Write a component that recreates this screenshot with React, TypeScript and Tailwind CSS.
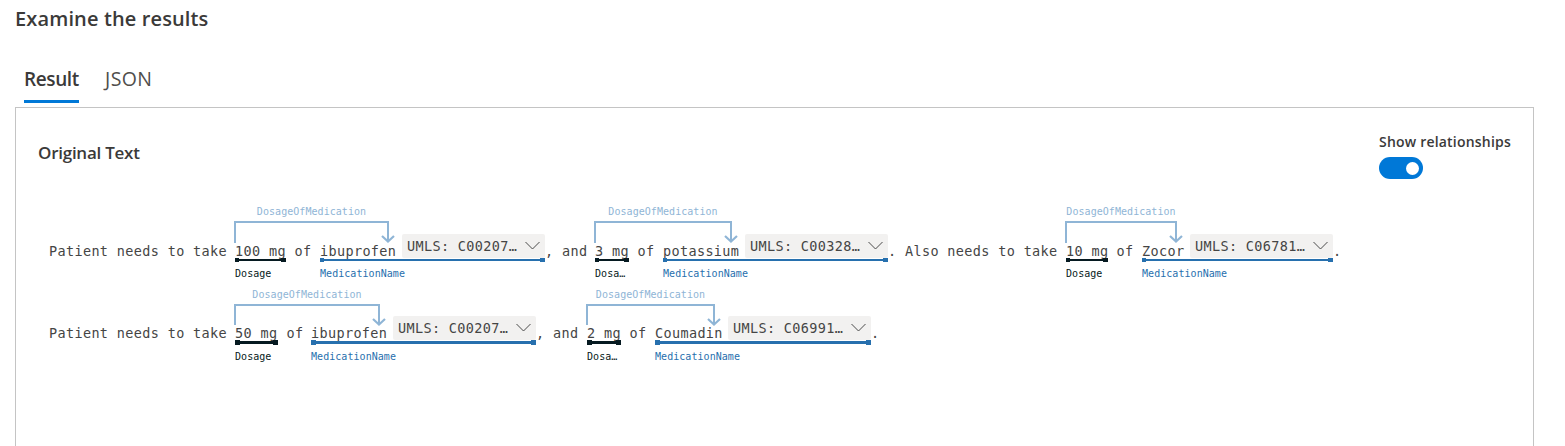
import React, { useState } from 'react';

type Relation = { width: number; label: string };

const BODY = "font-['DejaVu_Sans_Mono',monospace] text-[13.5px] leading-[20px] tracking-[0.35px] text-[#454545] whitespace-pre";
const SMALL = "font-['DejaVu_Sans_Mono',monospace] text-[10px] leading-[14px] tracking-[0.05px] whitespace-pre";

function Plain({ text, width }: { text: string; width: string }) {
  return <div className={`${BODY} ${width} shrink-0 pt-[37px]`}>{text}</div>;
}

function RelationArrow({ width, label, heavy }: Relation & { heavy?: boolean }) {
  return (
    <div className="absolute top-0 left-[-1px] text-[#8fb5d6]" style={{ width: width + 2 }}>
      <div className={`flex justify-center ${heavy ? 'h-[18px] pt-[2px]' : 'h-[17px] pt-px'} ${SMALL}`}>
        <span>{label}</span>
      </div>
      <svg className="block overflow-visible" width={width + 2} height="24" fill="none" stroke="currentColor" strokeWidth="2">
        <path d={`M1 ${heavy ? 21 : 22}V1H${width + 1}V20`} />
        <path d={`M${width - 5} 15L${width + 1} 20.5L${width + 7} 15`} strokeWidth="2.2" />
      </svg>
    </div>
  );
}

type EntityProps = {
  text: string;
  width: string;
  label: string;
  kind: 'dose' | 'drug';
  code?: string;
  heavy?: boolean;
  relation?: Relation;
};

function Entity({ text, width, label, kind, code, heavy, relation }: EntityProps) {
  const tone = kind === 'dose' ? 'text-[#061a21]' : 'text-[#2770ae]';
  return (
    <div className={`relative shrink-0 ${width}`}>
      {relation && <RelationArrow {...relation} heavy={heavy} />}
      <div className="flex pt-[30px]">
        <span className={`${BODY} pt-[7px]`}>{text}</span>
        {code && (
          <div className="ml-auto flex h-6 w-[143px] items-center justify-between rounded-[2px] bg-[#f2f1f0] pr-[5px] pl-[5px]">
            <span className={BODY}>{code}</span>
            <svg className="relative top-[-1px]" width="15" height="9" fill="none" stroke="#4a4a4a" strokeWidth="1">
              <path d="M0.5 1L7.5 8L14.5 1" />
            </svg>
          </div>
        )}
      </div>
      <div className={`absolute top-[54px] left-0 flex w-full items-center justify-between ${tone} ${heavy ? 'h-[5px]' : 'h-1'}`}>
        <i className={`h-full bg-current ${heavy ? 'w-[5px]' : 'w-1'}`} />
        <i className={`flex-1 bg-current ${heavy ? 'h-[3px]' : 'h-[2px]'}`} />
        <i className="h-full w-[5px] bg-current" />
      </div>
      <div className={`absolute left-0 ${heavy ? 'top-[64px]' : 'top-[63px]'} ${SMALL} ${tone}`}>{label}</div>
    </div>
  );
}

const REL = 'DosageOfMedication';

export default function App() {
  const [on, setOn] = useState(true);
  return (
    <main className="h-[446px] w-[1565px] overflow-hidden bg-white pl-[15px] font-['Open_Sans',sans-serif] text-[#3b3a39]">
      <h1 className="h-[60px] pt-[5px] text-[20px] leading-[28px] font-semibold tracking-[0.13px]">Examine the results</h1>
      <nav className="flex h-[43px] gap-[26px] pl-[9px] text-[19px] leading-[28px]">
        <button className="flex h-[43px] w-[55px] items-start border-b-[3px] border-[#0078d7] pt-[5px] font-semibold tracking-[-0.4px] whitespace-nowrap">Result</button>
        <button className="flex pt-[5px] text-[19.5px] tracking-[0.4px] text-[#504e4c]">JSON</button>
      </nav>
      <section className="mt-1 h-[400px] w-[1519px] border border-[#c4c4c4] pr-[22px] pl-[22px]">
        <header className="flex h-[96px] justify-between">
          <h2 className="pt-[32px] text-[17px] leading-[26px] font-semibold tracking-[-0.25px]">Original Text</h2>
          <div className="w-[132px] pt-[24px]">
            <div className="text-[14px] leading-[20px] font-semibold tracking-[0.2px] whitespace-nowrap">Show relationships</div>
            <button
              role="switch"
              aria-checked={on}
              aria-label="Show relationships"
              onClick={() => setOn(!on)}
              className={`mt-[5px] flex h-[22px] w-[44px] items-center rounded-full px-1 ${on ? 'justify-end bg-[#0078d7]' : 'justify-start bg-[#8a8886]'}`}
            >
              <i className="h-[13px] w-[13px] rounded-full bg-white" />
            </button>
          </div>
        </header>
        <div className="flex h-[82px] pl-[11px]">
          <Plain text="Patient needs to take " width="w-[186px]" />
          <Entity kind="dose" text="100 mg" width="w-[51px]" label="Dosage" relation={{ width: 153, label: REL }} />
          <Plain text=" of " width="w-[34px]" />
          <Entity kind="drug" text="ibuprofen" width="w-[225px]" label="MedicationName" code="UMLS: C00207…" />
          <Plain text=", and " width="w-[50px]" />
          <Entity kind="dose" text="3 mg" width="w-[34px]" label="Dosa…" relation={{ width: 136, label: REL }} />
          <Plain text=" of " width="w-[34px]" />
          <Entity kind="drug" text="potassium" width="w-[225px]" label="MedicationName" code="UMLS: C00328…" />
          <Plain text=". Also needs to take " width="w-[178px]" />
          <Entity kind="dose" text="10 mg" width="w-[42px]" label="Dosage" relation={{ width: 110, label: REL }} />
          <Plain text=" of " width="w-[34px]" />
          <Entity kind="drug" text="Zocor" width="w-[191px]" label="MedicationName" code="UMLS: C06781…" />
          <Plain text="." width="w-[9px]" />
        </div>
        <div className="flex h-[82px] pl-[11px]">
          <Plain text="Patient needs to take " width="w-[186px]" />
          <Entity heavy kind="dose" text="50 mg" width="w-[43px]" label="Dosage" relation={{ width: 144, label: REL }} />
          <Plain text=" of " width="w-[33px]" />
          <Entity heavy kind="drug" text="ibuprofen" width="w-[225px]" label="MedicationName" code="UMLS: C00207…" />
          <Plain text=", and " width="w-[51px]" />
          <Entity heavy kind="dose" text="2 mg" width="w-[34px]" label="Dosa…" relation={{ width: 127, label: REL }} />
          <Plain text=" of " width="w-[34px]" />
          <Entity heavy kind="drug" text="Coumadin" width="w-[216px]" label="MedicationName" code="UMLS: C06991…" />
          <Plain text="." width="w-[9px]" />
        </div>
      </section>
    </main>
  );
}
